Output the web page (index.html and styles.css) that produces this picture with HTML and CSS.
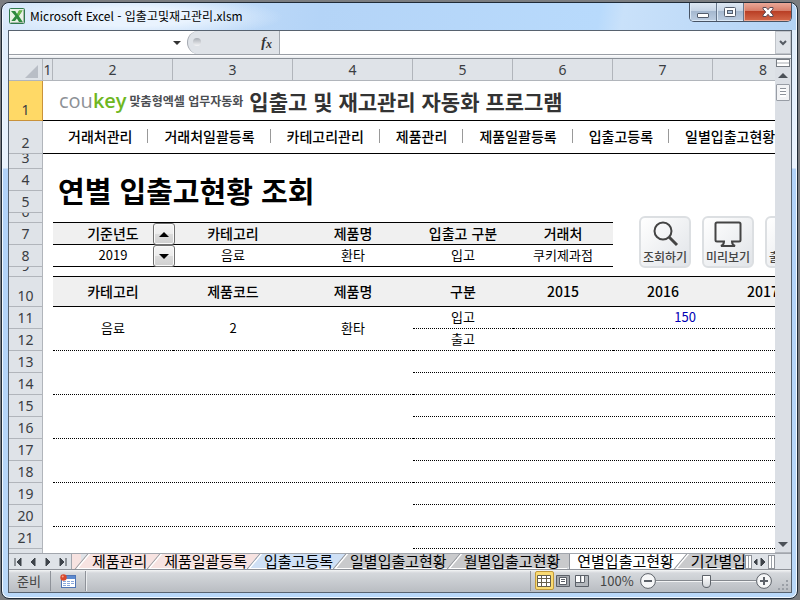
FILE: index.html
```html
<!DOCTYPE html>
<html lang="ko">
<head>
<meta charset="utf-8">
<title>Microsoft Excel - 입출고및재고관리.xlsm</title>
<link rel="stylesheet" href="styles.css">
</head>
<body>
<div class="window">
  <header class="titlebar">
    <svg class="app-icon" width="16" height="16" viewBox="0 0 16 16">
      <rect x=".5" y=".5" width="15" height="15" rx="1" fill="#e9f3e6" stroke="#2f7a4c"/>
      <path d="M14.5 1.5v13h-13" fill="none" stroke="#a9b8a9"/>
      <path d="M2 3h4.200l1.900 3L10 2.500h3.500L9.800 8l4 6H10l-2.100-3.500L6 13H2.300l4-5z" fill="#2f8a3e"/>
      <path d="M10 2.500h3.500L9.800 8 8.200 6z" fill="#6cba4b"/>
    </svg>
    <h1 class="window-title">Microsoft Excel - 입출고및재고관리.xlsm</h1>
    <div class="window-controls">
      <button class="ctl" aria-label="최소화"><svg width="14" height="12" viewBox="0 0 14 12"><rect x="1.500" y="7.500" width="11" height="4" rx=".5" fill="#fff" stroke="#535d6c"/></svg></button>
      <button class="ctl" aria-label="최대화"><svg width="14" height="12" viewBox="0 0 14 12"><rect x="1.500" y="1.500" width="11" height="9" rx="1" fill="#fff" stroke="#535d6c"/><rect x="4.500" y="4.500" width="5" height="3" fill="#a9bfd8" stroke="#535d6c"/></svg></button>
      <button class="ctl ctl-close" aria-label="닫기"><svg width="14" height="12" viewBox="0 0 14 12"><path d="M2 1.500h3.200L7 3.700l1.800-2.200H12V3L9.300 6 12 9v1.500H8.800L7 8.300l-1.800 2.200H2V9l2.700-3L2 3z" fill="#fff" stroke="#5a4a55"/></svg></button>
    </div>
  </header>

  <main class="client">
    <div class="formula-bar">
      <input class="name-box" aria-label="이름 상자">
      <button class="name-drop" aria-label="이름 목록"><svg width="8" height="4" viewBox="0 0 8 4"><path d="M0 0h8L4 4z" fill="#333"/></svg></button>
      <div class="fx"><span class="fx-knob"></span><button class="fx-button" aria-label="함수 삽입"><i>f</i><sub>x</sub></button></div>
      <input class="formula" aria-label="수식 입력줄">
      <button class="expand" aria-label="수식 입력줄 확장"><svg width="8" height="6" viewBox="0 0 8 6"><path d="M1 1l3 3 3-3" fill="none" stroke="#555b63" stroke-width="2"/></svg></button>
    </div>

    <div class="workspace">
      <div class="sheet">
        <table class="grid">
          <colgroup><col class="w-head"><col class="w-edge"><col class="w-text"><col class="w-text"><col class="w-text"><col class="w-num"><col class="w-num"><col class="w-num"><col></colgroup>
          <tr class="cols"><th class="corner"><svg width="13" height="13" viewBox="0 0 13 13"><path d="M13 0v13H0z" fill="#b9bec6"/></svg></th><th>1</th><th>2</th><th>3</th><th>4</th><th>5</th><th>6</th><th>7</th><th class="last"><span>8</span></th></tr>
          <tr class="r40 ruled"><th class="rh selected"><span>1</span></th><td colspan="8">
            <div class="brand"><span class="logo">cou<b>key</b></span><span class="slogan">맞춤형엑셀 업무자동화</span><h2>입출고 및 재고관리 자동화 프로그램</h2></div></td></tr>
          <tr class="r33 ruled"><th class="rh"><span>2</span></th><td colspan="8">
            <nav class="menu"><a href="#">거래처관리</a><a href="#">거래처일괄등록</a><a href="#">카테고리관리</a><a href="#">제품관리</a><a href="#">제품일괄등록</a><a href="#">입출고등록</a><a href="#">일별입출고현황</a></nav></td></tr>
          <tr class="r15"><th class="rh"><span>3</span></th><td colspan="8"></td></tr>
          <tr class="r22"><th class="rh"><span>4</span></th><td rowspan="2"></td><td colspan="7" rowspan="2"><h2 class="report-title">연별 입출고현황 조회</h2></td></tr>
          <tr class="r22"><th class="rh"><span>5</span></th></tr>
          <tr class="r10"><th class="rh"><span>6</span></th><td></td><td colspan="5" class="line"></td><td colspan="2"></td></tr>
          <tr class="r22 caption"><th class="rh"><span>7</span></th><td></td>
            <th class="spin-cell">기준년도<div class="spinner"><button aria-label="다음 연도"><svg width="10" height="5" viewBox="0 0 10 5"><path d="M5 0l5 5H0z"/></svg></button><button aria-label="이전 연도"><svg width="10" height="5" viewBox="0 0 10 5"><path d="M0 0h10L5 5z"/></svg></button></div></th>
            <th>카테고리</th><th>제품명</th><th>입출고 구분</th><th>거래처</th>
            <td colspan="2" rowspan="2" class="tools-cell"><div class="tools">
              <button><svg width="30" height="30" viewBox="0 0 30 30"><circle cx="13" cy="12" r="8.500"/><path d="M19 18l8 8" stroke-width="3"/></svg>조회하기</button>
              <button><svg width="30" height="30" viewBox="0 0 30 30"><path d="M11 22.500H4q-1.500 0-1.500-1.500V5q0-1.500 1.500-1.500h22q1.500 0 1.500 1.500v16q0 1.500-1.500 1.500h-7q0 3 3 4.500H8q3-1.500 3-4.500z"/></svg>미리보기</button>
              <button><svg width="30" height="30" viewBox="0 0 30 30"><path d="M8 10V3h14v7M8 21H3V10h24v11h-5M8 17h14v10H8z"/></svg>출력하기</button>
            </div></td></tr>
          <tr class="r22 values"><th class="rh"><span>8</span></th><td></td><td>2019</td><td>음료</td><td>환타</td><td>입고</td><td>쿠키제과점</td></tr>
          <tr class="r10"><th class="rh"><span>9</span></th><td></td><td colspan="7" class="line"></td></tr>
          <tr class="r30 caption"><th class="rh"><span>10</span></th><td></td><th>카테고리</th><th>제품코드</th><th>제품명</th><th>구분</th><th>2015</th><th>2016</th><th class="last"><span>2017</span></th></tr>
          <tr class="r22 item"><th class="rh"><span>11</span></th><td class="edge"></td><td rowspan="2">음료</td><td rowspan="2">2</td><td rowspan="2">환타</td><td>입고</td><td></td><td class="amount">150</td><td></td></tr>
          <tr class="r22 item"><th class="rh"><span>12</span></th><td class="edge"></td><td>출고</td><td></td><td></td><td></td></tr>
          <tr class="r22 item"><th class="rh"><span>13</span></th><td class="edge"></td><td colspan="3" rowspan="2"></td><td colspan="4"></td></tr>
          <tr class="r22 item"><th class="rh"><span>14</span></th><td class="edge"></td><td colspan="4"></td></tr>
          <tr class="r22 item"><th class="rh"><span>15</span></th><td class="edge"></td><td colspan="3" rowspan="2"></td><td colspan="4"></td></tr>
          <tr class="r22 item"><th class="rh"><span>16</span></th><td class="edge"></td><td colspan="4"></td></tr>
          <tr class="r22 item"><th class="rh"><span>17</span></th><td class="edge"></td><td colspan="3" rowspan="2"></td><td colspan="4"></td></tr>
          <tr class="r22 item"><th class="rh"><span>18</span></th><td class="edge"></td><td colspan="4"></td></tr>
          <tr class="r22 item"><th class="rh"><span>19</span></th><td class="edge"></td><td colspan="3" rowspan="2"></td><td colspan="4"></td></tr>
          <tr class="r22 item"><th class="rh"><span>20</span></th><td class="edge"></td><td colspan="4"></td></tr>
          <tr class="r22 item"><th class="rh"><span>21</span></th><td class="edge"></td><td colspan="3" rowspan="2"></td><td colspan="4"></td></tr>
          <tr class="r22 item"><th class="rh"><span>22</span></th><td class="edge"></td><td colspan="4"></td></tr>
        </table>
      </div>
      <div class="scrollbar">
        <span class="split"></span>
        <button aria-label="위로"><svg width="10" height="5" viewBox="0 0 10 5"><path d="M5 0l5 5H0z" fill="#4c5158"/></svg></button>
        <span class="thumb"></span>
        <button class="down" aria-label="아래로"><svg width="10" height="5" viewBox="0 0 10 5"><path d="M0 0h10L5 5z" fill="#4c5158"/></svg></button>
      </div>
    </div>

    <div class="tabbar">
      <div class="tab-nav">
        <button aria-label="첫 시트"><svg width="8" height="8" viewBox="0 0 8 8"><path d="M1 0v8M7 0L3 4l4 4z"/></svg></button>
        <button aria-label="이전 시트"><svg width="8" height="8" viewBox="0 0 8 8"><path d="M6 0L2 4l4 4z"/></svg></button>
        <button aria-label="다음 시트"><svg width="8" height="8" viewBox="0 0 8 8"><path d="M2 0l4 4-4 4z"/></svg></button>
        <button aria-label="마지막 시트"><svg width="8" height="8" viewBox="0 0 8 8"><path d="M7 0v8M1 0l4 4-4 4z"/></svg></button>
      </div>
      <div class="tabs">
        <span class="tab-stub"></span>
        <button class="tab pink">제품관리</button><button class="tab pink">제품일괄등록</button><button class="tab blue">입출고등록</button><button class="tab">일별입출고현황</button><button class="tab">월별입출고현황</button><button class="tab active">연별입출고현황</button><button class="tab">기간별입출고현황</button>
      </div>
      <div class="hscroll">
        <span class="grip"></span>
        <button aria-label="왼쪽으로"><svg width="4" height="6" viewBox="0 0 4 6"><path d="M3 0v6L0 3z"/></svg></button>
        <button aria-label="오른쪽으로"><svg width="6" height="8" viewBox="0 0 6 8"><path d="M1 0l4 4-4 4z"/></svg></button>
        <span class="grip"></span>
      </div>
    </div>

    <footer class="status">
      <span class="ready">준비</span>
      <button class="macro" aria-label="매크로 기록"><svg width="16" height="14" viewBox="0 0 16 14"><rect x="1.500" y="1.500" width="14" height="12" fill="#fff" stroke="#4f75b5"/><path d="M2 2h13v3H2z" fill="#5c8ad0"/><path d="M3 7.500h3M7 7.500h3M11 7.500h3M3 9.500h3M7 9.500h3M11 9.500h3M3 11.500h3M7 11.500h3" stroke="#8aa9dc"/><circle cx="3.500" cy="3.500" r="3.200" fill="#d9482b"/><circle cx="2.700" cy="2.500" r="1" fill="#f4a48c"/></svg></button>
      <span class="space"></span>
      <div class="views">
        <button class="on" aria-label="기본 보기"><svg width="15" height="12" viewBox="0 0 15 12"><path d="M.5.500h13v11H.5zM.5 3.500h13M.5 7.500h13M4.500.500v11M9.500.500v11" fill="#fff" stroke="#66604c"/></svg></button>
        <button aria-label="페이지 레이아웃"><svg width="15" height="12" viewBox="0 0 15 12"><path d="M.5.500h13v11H.5z" fill="#a3a7ad" stroke="#5b6068"/><path d="M3.500 2.500h7v7h-7zM5 4.500h4M5 6.500h4" fill="#fff" stroke="#5b6068"/></svg></button>
        <button aria-label="페이지 나누기"><svg width="15" height="12" viewBox="0 0 15 12"><path d="M.5.500h13v11H.5z" fill="#b3b7bc" stroke="#5b6068"/><path d="M1 1h4v6H1zM6.500 1h3v6h-3z" fill="#fff"/><path d="M1 7.500h8.500M5.500 1v6M9.500 1v6" stroke="#5b6068"/></svg></button>
      </div>
      <span class="percent">100%</span>
      <button class="round" aria-label="축소"><svg width="16" height="16" viewBox="0 0 16 16"><circle cx="8" cy="8" r="7.400"/><path d="M4 8h8"/></svg></button>
      <input class="zoom" type="range" min="0" max="100" value="50" aria-label="확대/축소">
      <button class="round" aria-label="확대"><svg width="16" height="16" viewBox="0 0 16 16"><circle cx="8" cy="8" r="7.400"/><path d="M4 8h8M8 4v8"/></svg></button>
      <svg class="resize" width="12" height="12" viewBox="0 0 12 12"><path d="M9 1h2v2H9zM5 5h2v2H5zM9 5h2v2H9zM1 9h2v2H1zM5 9h2v2H5zM9 9h2v2H9z" fill="#9a9fa6"/></svg>
    </footer>
  </main>
</div>
</body>
</html>
```
FILE: styles.css
```css
* { box-sizing: border-box; }

body {
  margin: 0;
  height: 100vh;
  padding: 2px 2px 1px 1px;
  background: #7b7d80;
  font-family: "Noto Sans CJK KR", sans-serif;
  font-size: 14px;
  color: #000;
  overflow: hidden;
}

button {
  display: flex;
  align-items: center;
  justify-content: center;
  margin: 0;
  padding: 0;
  border: 0;
  background: none;
  color: inherit;
  font: inherit;
}

input { border: 0; margin: 0; padding: 0; min-width: 0; font: inherit; }
svg { display: block; flex: none; }
h1, h2 { margin: 0; font-weight: 400; }

/* Window frame */
.window {
  display: flex;
  flex-direction: column;
  height: 100%;
  padding: 0 5px 5px 6px;
  border: 1px solid #1f2a36;
  border-radius: 8px;
  background: linear-gradient(#dcebfb, #eaf3fd 165px, #b1d2f8 166px, #b9d8f9);
  box-shadow: inset 0 0 0 1px #f3f9ff;
}

.titlebar {
  display: flex;
  align-items: flex-start;
  height: 27px;
  margin: 0 -4px 0 -5px;
  padding: 0 4px 0 6px;
  border-radius: 7px 7px 0 0;
  background:
    radial-gradient(ellipse 150px 22px at 130px 14px, #e9f3fe 40%, transparent),
    linear-gradient(100deg, #d6e7fa, #b4d4f7 40%, #b8dafc 75%, #c9e1fa 78%, #b3d3f5);
}

.app-icon { margin-top: 5px; }

.window-title {
  flex: 1;
  margin-left: 5px;
  font-size: 12px;
  line-height: 26px;
  white-space: nowrap;
}

.window-controls {
  display: flex;
  height: 19px;
  border: 1px solid #475364;
  border-top: 0;
  border-radius: 0 0 5px 5px;
  overflow: hidden;
}

.ctl {
  width: 27px;
  border-right: 1px solid #66758a;
  background: linear-gradient(#dde7f2, #c5d3e4 45%, #a5b8cf 46%, #bccde1);
  box-shadow: inset 1px -1px 0 #dbe8f5;
}

.ctl-close {
  width: 47px;
  border-right: 0;
  background: linear-gradient(#e9a898, #d57c68 45%, #b93e25 46%, #d4694a);
  box-shadow: inset 1px -1px 0 #eda995;
}

.client {
  display: flex;
  flex-direction: column;
  flex: 1;
  min-height: 0;
  border: 1px solid #57626f;
}

/* Formula bar */
.formula-bar {
  display: flex;
  flex: none;
  height: 28px;
  border-bottom: 1px solid #8a9097;
  background: linear-gradient(#fff 23px, #9a9fa6 23px, #9a9fa6 24px, #fff 24px, #e6e9ed);
  padding-bottom: 4px;
}

.name-box { width: 160px; background: none; }
.name-drop { width: 16px; }

.fx {
  display: flex;
  align-items: center;
  justify-content: space-between;
  width: 93px;
  height: 23px;
  margin-left: 2px;
  padding: 0 7px 0 5px;
  border: 1px solid #a4a9b0;
  border-width: 0 1px 0 1px;
  border-radius: 12px 0 0 12px;
  background: #dfe3e8;
}

.fx-knob {
  width: 8px;
  height: 8px;
  border-radius: 50%;
  margin-bottom: 2px;
  background: linear-gradient(#a9aeb5, #f4f5f7);
}

.fx-button {
  font: bold 14px/20px "Liberation Serif", serif;
  color: #333;
}

.fx-button sub { font-size: 12px; line-height: 12px; font-style: italic; padding-top: 3px; }
.formula { flex: 1; background: none; }
.expand { width: 16px; height: 23px; border: 1px solid #c0c4ca; background: #dfe3e8; }

/* Worksheet */
.workspace { display: flex; flex: 1; min-height: 0; }
.sheet { flex: 1; min-width: 0; overflow: hidden; background: #fff; }

.grid {
  table-layout: fixed;
  width: 100%;
  min-width: 804px;
  border-collapse: separate;
  border-spacing: 0;
}

.w-head { width: 34px; }
.w-edge { width: 10px; }
.w-text { width: 120px; }
.w-num { width: 100px; }

.grid td, .grid th {
  padding: 0;
  font-size: 13px;
  line-height: 16px;
  text-align: center;
  white-space: nowrap;
}

.cols th, .grid .rh {
  border: 0 solid #b1b5bb;
  border-width: 0 1px 1px 0;
  background: #dfe3e8;
  color: #3a3d42;
  font-family: "Noto Sans", sans-serif;
  font-size: 14px;
  font-weight: 400;
}

.cols { height: 22px; }
.corner svg { margin: 3px 0 0 16px; }
.last span { display: block; width: 100px; }

.grid .rh { vertical-align: bottom; }
.rh span { display: flex; align-items: flex-end; justify-content: center; height: 20px; line-height: 20px; overflow: hidden; }
.r15 .rh span { height: 14px; }
.r10 .rh span { height: 9px; }
.grid .selected { background: #ffd966; border-color: #c9923a; }

.r40 { height: 40px; }
.r33 { height: 33px; }
.r30 { height: 30px; }
.r22 { height: 22px; }
.r15 { height: 15px; }
.r10 { height: 10px; }

.ruled td, .grid .line { border-bottom: 1px solid #000; }

.brand { display: flex; align-items: center; padding-left: 16px; }
.logo { font-family: "Open Sans", sans-serif; font-size: 20px; line-height: 30px; color: #8d9196; }
.logo b { font-weight: 600; color: #6fb71f; }
.slogan { margin-left: 3px; font-size: 12px; font-weight: 700; color: #4b4e52; }
.brand h2 { margin-left: 6px; font-size: 21px; line-height: 30px; font-weight: 700; color: #333; }

.menu { display: flex; padding: 0 0 2px 9px; }
.menu a { display: flex; align-items: center; padding-left: 16px; font-size: 14px; line-height: 20px; font-weight: 500; color: #000; text-decoration: none; }
.menu a:not(:last-child)::after { content: ""; width: 1px; height: 14px; margin-left: 15px; background: #999; }

.grid .report-title { padding: 0 0 2px 5px; font-size: 29px; line-height: 40px; font-weight: 700; text-align: left; }

.caption th:not(.rh) { padding-bottom: 2px; border-bottom: 1px solid #000; background: #f0f0f0; font-size: 14px; font-weight: 500; }
.values td:nth-child(n+3) { padding-bottom: 2px; border-bottom: 1px solid #000; }
.item td:not(.edge) { padding-bottom: 2px; border-bottom: 1px dotted #000; }
.grid .amount { padding-right: 17px; text-align: right; color: #0000b4; }

.spin-cell { position: relative; }
.spinner { position: absolute; z-index: 1; right: -2px; top: 0; width: 22px; }
.spinner button {
  width: 22px;
  height: 22px;
  border: 1px solid #707070;
  border-radius: 3px;
  background: linear-gradient(#f4f4f4, #ececec 50%, #dcdcdc 51%, #d0d0d0);
  box-shadow: inset 0 0 0 1px #fafafa;
}

.tools-cell { position: relative; }
.tools { position: absolute; left: 26px; top: -7px; display: flex; gap: 11px; }
.tools button {
  flex-direction: column;
  width: 52px;
  height: 52px;
  border: 2px solid #dcdfe2;
  border-radius: 6px;
  background: linear-gradient(135deg, #fff, #e1e4e8);
  font-size: 12px;
  line-height: 16px;
  font-weight: 500;
  color: #444;
}
.tools svg { fill: none; stroke: #444; stroke-width: 2; }

.scrollbar { display: flex; flex-direction: column; width: 16px; background: #dbdfe5; }
.scrollbar button { height: 17px; }
.split { height: 8px; margin: 0 1px; border: 1px solid #777c83; background: linear-gradient(#fff 2px, #a7abb1 3px, #fff 4px); }
.thumb {
  height: 17px;
  margin: 0 1px;
  border: 1px solid #989da5;
  border-radius: 1px;
  background: repeating-linear-gradient(#8d929a 0 1px, #fff 1px 3px) content-box, #f2f3f5;
  padding: 3px;
}
.scrollbar .down { margin-top: auto; border-bottom: 1px solid #b1b5bb; }

/* Sheet tabs */
.tabbar { display: flex; flex: none; height: 16px; border-top: 1px solid #a2a6ad; background: #dfe3e8; }
.tab-nav { display: flex; flex: none; width: 63px; padding: 0 1px; border-right: 1px solid #a2a6ad; }
.tab-nav button { flex: 1; }
.tab-nav svg, .hscroll svg { fill: #3f444b; stroke: #3f444b; stroke-width: 1; }
.tabs { display: flex; flex: 1; min-width: 0; overflow: hidden; }
.tab-stub { flex: none; width: 9px; background: #f7e3e1; }

.tab {
  position: relative;
  flex: none;
  z-index: 0;
  padding: 0 6px 2px 11px;
  background: none;
  font-size: 15px;
  line-height: 14px;
  font-weight: 400;
}
.tab::before {
  content: "";
  position: absolute;
  z-index: -1;
  inset: 0 -6px 0 0;
  border-left: 1px solid #8e9299;
  background: #c9cacc;
  box-shadow: inset 2px -1px 0 #fff;
  transform: skewX(-40deg);
}
.pink::before { background: #f7e3e1; }
.blue::before { background: #cfe0f5; }
.active::before { left: 3px; background: linear-gradient(#fff, #fff) no-repeat; transform: none; }

.hscroll { display: flex; flex: none; align-items: center; justify-content: space-between; width: 46px; padding-right: 16px; }
.hscroll .grip { width: 7px; height: 14px; border: 1px solid #8e9299; background: linear-gradient(90deg, #fff 2px, #9a9fa6 2px, #9a9fa6 3px, #fff 3px); }

/* Status bar */
.status {
  display: flex;
  flex: none;
  align-items: center;
  height: 23px;
  padding: 0 2px 0 8px;
  border-top: 1px solid #8e9299;
  background: linear-gradient(#f4f5f6, #d5d8dc 3px, #b9bdc2);
  font-size: 13px;
  color: #444;
}
.ready { width: 33px; line-height: 20px; }
.macro { width: 36px; height: 20px; border: 1px solid #8e9299; border-width: 0 1px; box-shadow: 1px 0 0 #eceef0; }
.space { flex: 1; }
.views { display: flex; height: 20px; padding-left: 4px; border-left: 1px solid #8e9299; }
.views button { width: 19px; height: 19px; border-radius: 2px; }
.views .on { border: 1px solid #c29a3a; background: #fbdc73; }
.percent { width: 48px; padding-left: 8px; line-height: 20px; white-space: nowrap; }
.round svg { fill: #f5f6f7; stroke: #5d6269; }
.round path { stroke-width: 2; }
.zoom { width: 100px; height: 16px; appearance: none; background: linear-gradient(#0000 7px, #85898f 7px, #85898f 8px, #f2f3f4 8px, #f2f3f4 9px, #0000 9px); }
.zoom::-webkit-slider-thumb {
  appearance: none;
  width: 9px;
  height: 13px;
  background: linear-gradient(#fff, #d4d7db);
  border: 1px solid #5d6269;
  border-radius: 1px 1px 5px 5px;
}
.resize { margin: 8px 0 0 5px; }
```
